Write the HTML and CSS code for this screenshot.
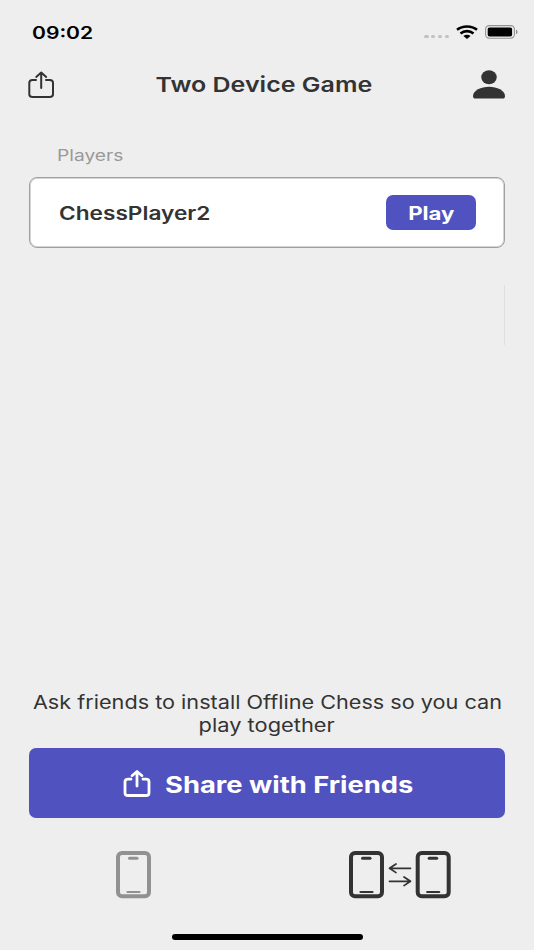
FILE: index.html
```html
<!DOCTYPE html>
<html lang="en">
<head>
    <meta charset="UTF-8">
    <meta name="viewport" content="width=device-width, initial-scale=1.0">
    <title>Two Device Game</title>
    <link rel="stylesheet" href="styles.css">
</head>
<body>
    <div class="status-bar">
        <span class="time wide">09:02</span>
        <div class="status-icons">
            <div class="signal"><i></i><i></i><i></i><i></i></div>
            <svg class="wifi" width="22" height="14" viewBox="0 0 22 14">
                <g fill="none" stroke="#000" stroke-width="2.6">
                    <path d="M1 4.800C6.500 .3 15.500 .3 21 4.800"/>
                    <path d="M4.500 8.400C8.200 5.300 13.800 5.300 17.500 8.400"/>
                </g>
                <path d="M7.400 11C9.500 9.200 12.500 9.200 14.600 11L11 13.900z"/>
            </svg>
            <svg class="battery" width="33" height="14" viewBox="0 0 33 14">
                <rect x=".6" y=".6" width="28.800" height="12.600" rx="3.600" fill="none" stroke="#929292" stroke-width="1.100"/>
                <rect x="2.700" y="2.400" width="24.400" height="9" rx="1.700"/>
                <path d="M31 4.700c2 .7 2 3.700 0 4.400z" fill="#8a8a8a"/>
            </svg>
        </div>
    </div>

    <div class="header">
        <svg class="share-icon" width="26" height="28" viewBox="0 0 26 28">
            <g fill="none" stroke="#333" stroke-width="2" stroke-linecap="round" stroke-linejoin="round">
                <path d="M8 10H4.500Q1.300 10 1.300 12.800V24.200Q1.300 27 4.500 27H21.800Q25 27 25 24.200V12.800Q25 10 21.800 10H18"/>
                <path d="M13.200 18V3M8.200 6.900L13.200 2.600L18.200 6.900"/>
            </g>
        </svg>
        <h1 class="wide">Two Device Game</h1>
        <svg class="user-icon" width="32" height="29" viewBox="0 0 32 29" fill="#333">
            <ellipse cx="16" cy="7.300" rx="7.700" ry="7"/>
            <path d="M0 26C0 20.500 8 16.700 16 16.700S32 20.500 32 26Q32 28.600 29.500 28.600H2.500Q0 28.600 0 26z"/>
        </svg>
    </div>

    <div class="players">
        <div class="players-label"><span class="wide">Players</span></div>
        <div class="player-card">
            <span class="player-name wide">ChessPlayer2</span>
            <button class="play-btn"><span class="wide">Play</span></button>
        </div>
        <div class="scroll-line"></div>
    </div>

    <div class="invite">
        <p><span class="line-one wide">Ask friends to install Offline Chess so you can</span><span class="line-two wide">play together</span></p>
        <button class="share-btn">
            <svg width="28" height="28" viewBox="0 0 28 28">
                <g fill="none" stroke="#fff" stroke-width="2.800" stroke-linecap="round" stroke-linejoin="round">
                    <path d="M8 10.200H5Q2 10.200 2 12.700V23.900Q2 26.500 5 26.500H23Q26 26.500 26 23.900V12.700Q26 10.200 23 10.200H20"/>
                    <path d="M14 17V3.200M9 6.700L14 2.500L19 6.700"/>
                </g>
            </svg>
            <span class="wide">Share with Friends</span>
        </button>
    </div>

    <div class="tabs">
        <div class="tab">
            <svg width="35" height="48" viewBox="0 0 35 48">
                <g fill="none" stroke="#919191" stroke-linecap="round">
                    <rect x="2" y="2" width="31" height="43.200" rx="4" stroke-width="4"/>
                    <path d="M13.500 7.200H21" stroke-width="3"/>
                    <path d="M11.500 41H23.500" stroke-width="2.200"/>
                </g>
            </svg>
        </div>
        <div class="tab">
            <svg width="102" height="48" viewBox="0 0 102 48">
                <g fill="none" stroke="#333" stroke-linecap="round" stroke-linejoin="round">
                    <rect x="2" y="2" width="31" height="43.200" rx="4" stroke-width="4"/>
                    <path d="M13.500 7.200H21" stroke-width="3"/>
                    <path d="M11.500 41H23.500" stroke-width="2.200"/>
                    <rect x="68.700" y="2" width="31" height="43.200" rx="4" stroke-width="4"/>
                    <path d="M80.200 7.200H87.700" stroke-width="3"/>
                    <path d="M78.200 41H90.200" stroke-width="2.200"/>
                    <path d="M61.500 17.300H40.500M47 13L40.500 17.300L47 21.600" stroke-width="1.700"/>
                    <path d="M40.500 30.300H61.500M55 26L61.500 30.300L55 34.600" stroke-width="1.700"/>
                </g>
            </svg>
        </div>
    </div>
    <div class="home-bar"></div>
</body>
</html>
```

FILE: styles.css
```css
* {
    padding: 0;
    margin: 0;
    box-sizing: border-box;
    font-family: Inter, "Liberation Sans", sans-serif;
}

body {
    width: 534px;
    height: 950px;
    display: flex;
    flex-direction: column;
    background-color: #eee;
    color: #333;
    overflow: hidden;
}

svg {
    display: block;
    flex-shrink: 0;
}

button {
    border: none;
    color: white;
    cursor: pointer;
}

/* wide letters */
.wide {
    display: inline-block;
    white-space: nowrap;
    transform: scaleX(1.2);
}

.status-bar {
    height: 64px;
    padding: 0 16px 0 32px;
    display: flex;
    align-items: center;
    justify-content: space-between;
}

.time {
    color: black;
    font-size: 17px;
    font-weight: 600;
    margin-top: 1px;
    transform: scaleX(1.24);
    transform-origin: left;
}

.status-icons {
    display: flex;
    align-items: center;
}

.signal {
    display: flex;
    gap: 2.4px;
    margin: 9px 7px 0 0;
}

.signal i {
    width: 4.4px;
    height: 3.8px;
    border-radius: 50%;
    background: #c0c0c0;
}

.battery {
    margin-left: 7px;
}

.header {
    height: 42px;
    padding: 0 29px 2px 28px;
    display: flex;
    align-items: center;
    justify-content: space-between;
}

.header h1 {
    font-size: 20.5px;
    font-weight: 600;
    transform: scaleX(1.22);
}

.players {
    flex: 1;
    padding: 39px 29px 0;
}

.players-label {
    height: 32px;
    padding-left: 28px;
    font-size: 16px;
    line-height: 20px;
    color: #999;
}

.players-label .wide,
.player-name {
    transform-origin: left;
}

.player-card {
    height: 71px;
    padding: 0 28px 0 29px;
    display: flex;
    align-items: center;
    justify-content: space-between;
    background: white;
    border: 1px solid #a0a0a0;
    border-radius: 8px;
    box-shadow: inset 0 0 0 1px #d4d4d4;
}

.player-name {
    font-size: 18.5px;
    font-weight: 600;
    transform: scaleX(1.225);
}

.play-btn {
    width: 90px;
    height: 35px;
    border-radius: 7px;
    background: #4f52bf;
    font-size: 18.5px;
    font-weight: 700;
}

.scroll-line {
    width: 1px;
    height: 60px;
    margin: 37px 0 0 auto;
    background: #e0e0e0;
}

.invite {
    padding: 0 29px;
}

.invite p {
    display: flex;
    flex-direction: column;
    align-items: center;
    font-size: 18.5px;
    line-height: 22.5px;
    margin-bottom: 12px;
}

.invite .line-one {
    transform: scaleX(1.17);
}

.invite .line-two {
    transform: scaleX(1.18);
}

.share-btn {
    width: 100%;
    height: 70px;
    display: flex;
    align-items: center;
    padding-left: 94px;
    gap: 14px;
    border-radius: 7px;
    background: #4f52bf;
    font-size: 22.5px;
    font-weight: 700;
}

.share-btn .wide {
    margin-top: 2px;
    transform: scaleX(1.215);
    transform-origin: left;
}

.tabs {
    height: 116px;
    padding: 33px 1px 0 0;
    display: grid;
    grid-template-columns: 1fr 1fr;
    justify-items: center;
}

.home-bar {
    width: 191px;
    height: 6px;
    margin: 0 auto 10px;
    border-radius: 3px;
    background: black;
}
```
